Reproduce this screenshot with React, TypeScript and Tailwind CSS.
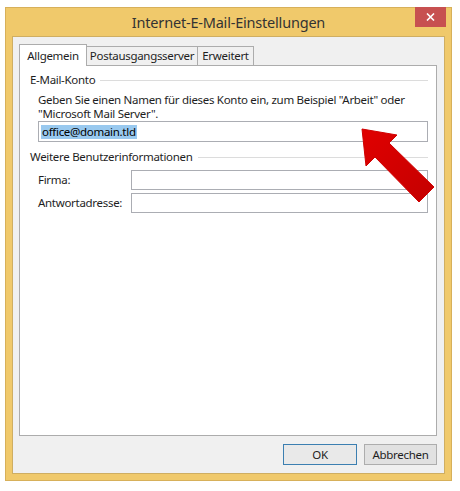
import React from 'react'

const font = { fontFamily: '"Noto Sans", "Open Sans", sans-serif' }

function GroupHeader({ label }: { label: string }) {
  return (
    <div className="flex items-center h-[16px] pr-[8px]">
      <span className="text-[11.5px] leading-[16px] text-[#1e1e1e]">{label}</span>
      <div className="flex-1 ml-[5px] h-px bg-[#dcdcdc]" />
    </div>
  )
}

function Field({ label, top }: { label: string; top: string }) {
  return (
    <div className={`flex items-center pl-[8px] pr-[8px] ${top}`}>
      <span className="w-[93px] text-[11.5px] text-[#1e1e1e]">{label}</span>
      <div className="flex-1 h-[20px] border border-[#abadb3] bg-white" />
    </div>
  )
}

function Arrow() {
  return (
    <svg className="absolute left-0 top-0 pointer-events-none" width="460" height="491" viewBox="0 0 460 491">
      <defs>
        <linearGradient id="ar" x1="0" y1="0" x2="1" y2="1">
          <stop offset="0" stopColor="#e00000" />
          <stop offset="1" stopColor="#c40000" />
        </linearGradient>
      </defs>
      <polygon
        points="362,129 397,135 389,143 434,187 419,202 375,157 366,166"
        fill="url(#ar)"
        stroke="#d00000"
        strokeWidth="1"
        strokeLinejoin="round"
      />
    </svg>
  )
}

export default function App() {
  return (
    <div className="relative w-[460px] h-[491px] bg-white pt-[7px] pl-[5px] tracking-[-0.3px]" style={font}>
      <div className="w-[447px] h-[474px] bg-[#f0c96b] border border-[#d7b05a] flex flex-col">
        {/* title bar */}
        <div className="relative h-[28px] flex items-center justify-center">
          <span className="text-[14.5px] text-[#333333] pt-[1px] tracking-[-0.2px]">Internet-E-Mail-Einstellungen</span>
          <div className="absolute -top-px right-[5px] w-[31px] h-[20px] bg-[#c75050] flex items-center justify-center">
            <svg width="9" height="8" viewBox="0 0 9 8">
              <path d="M1 0.5 L8 7.5 M8 0.5 L1 7.5" stroke="white" strokeWidth="1.6" />
            </svg>
          </div>
        </div>

        {/* client area */}
        <div className="flex-1 mx-[6px] mb-[6px] bg-[#f0f0f0] border border-[#cfae62] pt-[7px] pl-[6px] pr-[7px] flex flex-col">
          {/* tabs */}
          <div className="flex items-end h-[21px] text-[11.5px] text-[#1e1e1e]">
            <div className="relative z-10 -mb-px h-[22px] w-[68px] bg-white border border-b-0 border-[#acacac] flex items-center justify-center">
              Allgemein
            </div>
            <div className="h-[19px] w-[112px] -ml-px bg-[#f0f0f0] border border-b-0 border-[#acacac] flex items-center justify-center">
              Postausgangsserver
            </div>
            <div className="h-[19px] w-[57px] -ml-px bg-[#f0f0f0] border border-b-0 border-[#acacac] flex items-center justify-center">
              Erweitert
            </div>
          </div>

          {/* panel */}
          <div className="h-[371px] bg-white border border-[#acacac] pt-[6px] pl-[10px]">
            <GroupHeader label="E-Mail-Konto" />
            <div className="pl-[8px] pr-[8px] mt-[5px]">
              <p className="text-[11.5px] leading-[14px] text-[#1e1e1e] whitespace-nowrap">
                Geben Sie einen Namen für dieses Konto ein, zum Beispiel "Arbeit" oder
                <br />
                "Microsoft Mail Server".
              </p>
              <div className="h-[21px] border border-[#abadb3] bg-white flex items-center pl-[2px]">
                <span className="bg-[#99c9ef] text-[11.5px] leading-[14px] text-black px-px">office@domain.tld</span>
              </div>
            </div>
            <div className="mt-[7px]">
              <GroupHeader label="Weitere Benutzerinformationen" />
            </div>
            <Field label="Firma:" top="mt-[5px]" />
            <Field label="Antwortadresse:" top="mt-[3px]" />
          </div>

          {/* buttons */}
          <div className="flex justify-end gap-[7px] mt-[8px] text-[11.5px] text-[#1e1e1e]">
            <button className="w-[74px] h-[21px] border border-[#3c7fb1] bg-[#e9e9e9] flex items-center justify-center">
              OK
            </button>
            <button className="w-[73px] h-[21px] border border-[#adadad] bg-[#e1e1e1] flex items-center justify-center">
              Abbrechen
            </button>
          </div>
        </div>
      </div>
      <Arrow />
    </div>
  )
}
